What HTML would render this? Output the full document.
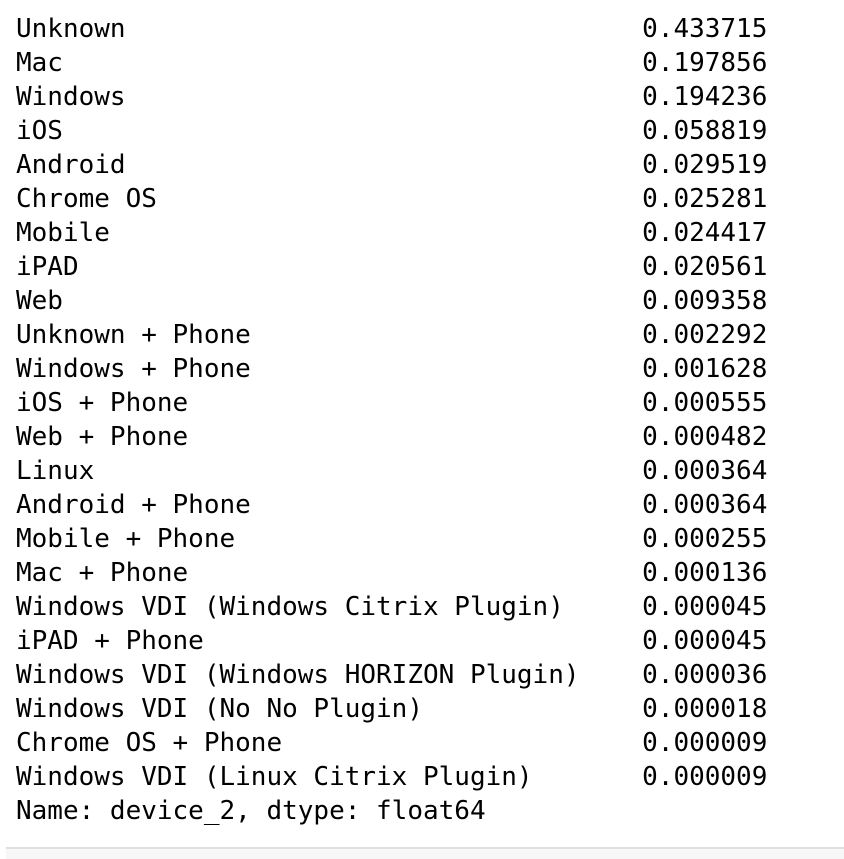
<!DOCTYPE html>
<html><head><style>
html,body{margin:0;padding:0;background:#fff;width:844px;height:852px;overflow:hidden}
pre{position:absolute;left:16px;top:12px;margin:0;font-family:"DejaVu Sans Mono","Liberation Mono",monospace;font-size:26px;line-height:34px;color:#000}
.bar{position:absolute;left:6px;right:0;top:847px;height:10px;border-top:2px solid #e0e0e0;background:#f7f7f7}
</style></head><body>
<pre>Unknown                                 0.433715
Mac                                     0.197856
Windows                                 0.194236
iOS                                     0.058819
Android                                 0.029519
Chrome OS                               0.025281
Mobile                                  0.024417
iPAD                                    0.020561
Web                                     0.009358
Unknown + Phone                         0.002292
Windows + Phone                         0.001628
iOS + Phone                             0.000555
Web + Phone                             0.000482
Linux                                   0.000364
Android + Phone                         0.000364
Mobile + Phone                          0.000255
Mac + Phone                             0.000136
Windows VDI (Windows Citrix Plugin)     0.000045
iPAD + Phone                            0.000045
Windows VDI (Windows HORIZON Plugin)    0.000036
Windows VDI (No No Plugin)              0.000018
Chrome OS + Phone                       0.000009
Windows VDI (Linux Citrix Plugin)       0.000009
Name: device_2, dtype: float64</pre>
<div class="bar"></div>
</body></html>
